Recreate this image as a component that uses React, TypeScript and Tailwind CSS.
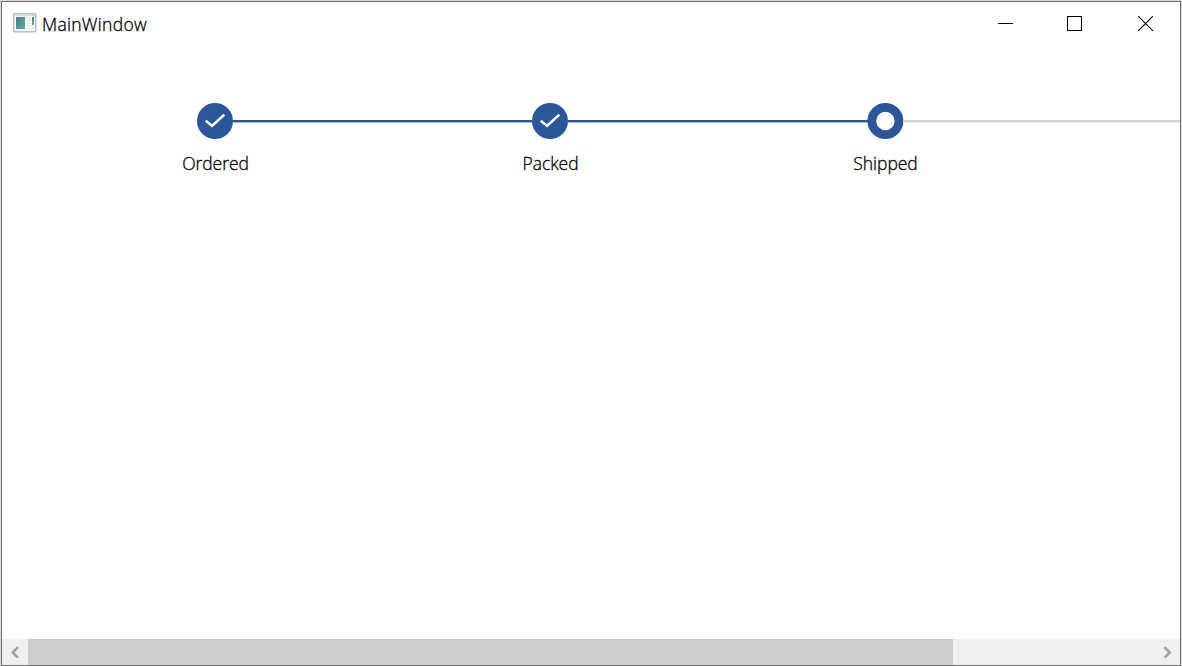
import React from "react";

type StepState = "done" | "current";

const steps: { label: string; state: StepState }[] = [
  { label: "Ordered", state: "done" },
  { label: "Packed", state: "done" },
  { label: "Shipped", state: "current" },
];

function AppIcon() {
  return (
    <svg width="24" height="20" viewBox="0 0 24 20" className="-mt-[2px] shrink-0">
      <defs>
        <linearGradient id="pane" x1="0" y1="0" x2="1" y2="1">
          <stop offset="0" stopColor="#4679a4" />
          <stop offset="1" stopColor="#5fb184" />
        </linearGradient>
        <linearGradient id="side" x1="0" y1="0" x2="0" y2="1">
          <stop offset="0" stopColor="#4478b5" />
          <stop offset="1" stopColor="#62b184" />
        </linearGradient>
      </defs>
      <rect x="0.75" y="0.75" width="22" height="18" rx="1" fill="#fafafa" stroke="#b9bec6" strokeWidth="1.5" />
      <rect x="1.5" y="1.5" width="20.5" height="1.5" fill="#d3d9e4" />
      <rect x="3" y="4" width="9" height="12" fill="url(#pane)" />
      <rect x="14" y="4" width="4" height="7" fill="#eeeeee" />
      <rect x="14" y="12" width="7" height="4" fill="#eeeeee" />
      <rect x="19" y="4" width="2" height="8" fill="url(#side)" />
    </svg>
  );
}

function TitleBar() {
  return (
    <header className="flex h-[44px] shrink-0 items-center justify-between pl-[11px]">
      <div className="flex items-center">
        <AppIcon />
        <span className="ml-[5px] leading-6 tracking-[0.3px]">MainWindow</span>
      </div>
      <div className="flex h-full">
        <button aria-label="Minimize" className="flex h-full w-[69px] items-start justify-center pt-[14px]">
          <svg width="15" height="15" shapeRendering="crispEdges">
            <rect y="7" width="15" height="1" />
          </svg>
        </button>
        <button aria-label="Maximize" className="flex h-full w-[69px] items-start justify-center pt-[14px]">
          <span className="size-[15px] border border-black" />
        </button>
        <button aria-label="Close" className="flex h-full w-[71px] items-start justify-center pl-[2px] pt-[14px]">
          <svg width="15" height="15" stroke="#000" strokeWidth="1.1">
            <path d="M0 0L15 15M15 0L0 15" />
          </svg>
        </button>
      </div>
    </header>
  );
}

function Marker({ state }: { state: StepState }) {
  if (state === "current") {
    return (
      <svg width="36" height="36" viewBox="0 0 36 36" className="shrink-0 overflow-visible">
        <circle cx="18.4" cy="18" r="13.6" fill="#fff" stroke="#2b579a" strokeWidth="8.8" />
      </svg>
    );
  }
  return (
    <svg width="36" height="36" viewBox="0 0 36 36" className="shrink-0">
      <circle cx="18" cy="18" r="18" fill="#2b579a" />
      <path d="M8.7 17.8L15.1 22.9L27.3 11.6" fill="none" stroke="#fff" strokeWidth="2.6" />
    </svg>
  );
}

function Connector({ done }: { done: boolean }) {
  return (
    <svg height="36" className="w-[299px] shrink-0 overflow-visible">
      <rect y="17" width="300" height="2.4" fill={done ? "#2b579a" : "#d2d2d2"} />
    </svg>
  );
}

function Stepper() {
  return (
    <main className="flex min-h-0 grow overflow-hidden pl-[195px] pt-[57px]">
      {steps.map(({ label, state }) => (
        <div key={label} className="flex w-[335px] shrink-0 flex-col">
          <div className="flex">
            <Marker state={state} />
            <Connector done={state === "done"} />
          </div>
          <span className="-ml-[32px] mt-[12px] w-[101px] text-center leading-6">{label}</span>
        </div>
      ))}
    </main>
  );
}

function ScrollBar() {
  return (
    <footer className="flex h-[26px] shrink-0 bg-[#f0f0f0]">
      <div className="flex w-[26px] items-center justify-center">
        <svg width="10" height="12" fill="none" stroke="#a0a0a0" strokeWidth="2.5">
          <path d="M8 1.2L2.7 6.5L8 11.8" />
        </svg>
      </div>
      <div className="w-[925px] bg-[#cdcdcd]" />
      <div className="grow" />
      <div className="flex w-[26px] items-center justify-center">
        <svg width="10" height="12" fill="none" stroke="#a0a0a0" strokeWidth="2.5">
          <path d="M2.5 1.2L7.8 6.5L2.5 11.8" />
        </svg>
      </div>
    </footer>
  );
}

export default function App() {
  return (
    <div className="h-[666px] w-[1182px] overflow-hidden bg-[#d8dad9] px-px pt-px font-['Open_Sans','Noto_Sans',sans-serif] text-[17.5px] font-[350] tracking-[-0.05px] text-black [-webkit-text-stroke:0.3px_#000]">
      <div className="flex h-[665px] flex-col border border-[#6e6e6e] bg-white">
        <TitleBar />
        <Stepper />
        <ScrollBar />
      </div>
    </div>
  );
}
